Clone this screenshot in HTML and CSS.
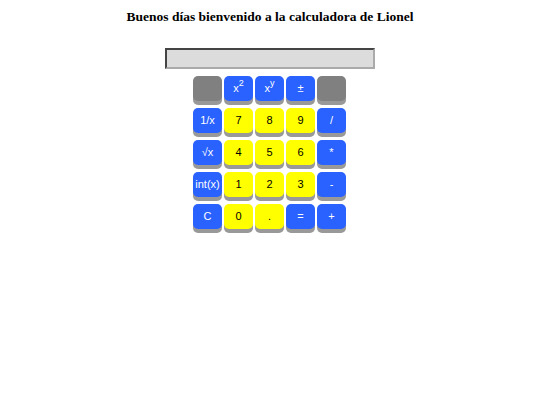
FILE: index.html
```html
<!DOCTYPE html>
<html lang="es">
<head>
  <title>Calculadora</title>
  <meta charset="utf-8" />
  <link rel="stylesheet" href="styles.css">
</head>
<body>

  <h1 class="title">Buenos días bienvenido a la calculadora de Lionel</h1>

  <div class="calc">
    <input type="text" class="screen" id="screen" readonly />

    <div class="keys">
      <button class="key gray"></button>
      <button class="key blue">x<sup>2</sup></button>
      <button class="key blue">x<sup>y</sup></button>
      <button class="key blue">±</button>
      <button class="key gray"></button>

      <button class="key blue">1/x</button>
      <button class="key yellow">7</button>
      <button class="key yellow">8</button>
      <button class="key yellow">9</button>
      <button class="key blue">/</button>

      <button class="key blue">√x</button>
      <button class="key yellow">4</button>
      <button class="key yellow">5</button>
      <button class="key yellow">6</button>
      <button class="key blue">*</button>

      <button class="key blue">int(x)</button>
      <button class="key yellow">1</button>
      <button class="key yellow">2</button>
      <button class="key yellow">3</button>
      <button class="key blue">-</button>

      <button class="key blue">C</button>
      <button class="key yellow">0</button>
      <button class="key yellow">.</button>
      <button class="key blue">=</button>
      <button class="key blue">+</button>
    </div>
  </div>

</body>
</html>
```

FILE: styles.css
```css
body {
  margin: 8px;
  font-family: "Liberation Serif", serif;
}

.title {
  text-align: center;
  font-size: 13.5px;
  font-weight: bold;
  margin: 0 0 23px 0;
  line-height: 17px;
}

.calc {
  display: flex;
  flex-direction: column;
  align-items: center;
  padding-bottom: 10px;
}

.screen {
  box-sizing: border-box;
  width: 210px;
  height: 21px;
  margin: 0 0 7px 0;
  background: #dcdcdc;
  border: 2px solid;
  border-color: #444 #aaa #aaa #444;
  padding: 0;
}

.keys {
  display: grid;
  grid-template-columns: repeat(5, 29px);
  grid-auto-rows: 25px;
  column-gap: 2px;
  row-gap: 7px;
  margin-right: 1px;
}

.key {
  border: none;
  border-radius: 5px;
  padding: 0;
  font-family: "Liberation Sans", Arial, sans-serif;
  font-size: 11px;
  box-shadow: 0 4px 0 #999;
  line-height: 25px;
}

.key sup {
  font-size: 9px;
  line-height: 0;
  position: relative;
  top: -1px;
}

.gray {
  background: #808080;
}

.blue {
  background: #2962ff;
  color: #fff;
}

.yellow {
  background: #ffff00;
  color: #000;
}
```
